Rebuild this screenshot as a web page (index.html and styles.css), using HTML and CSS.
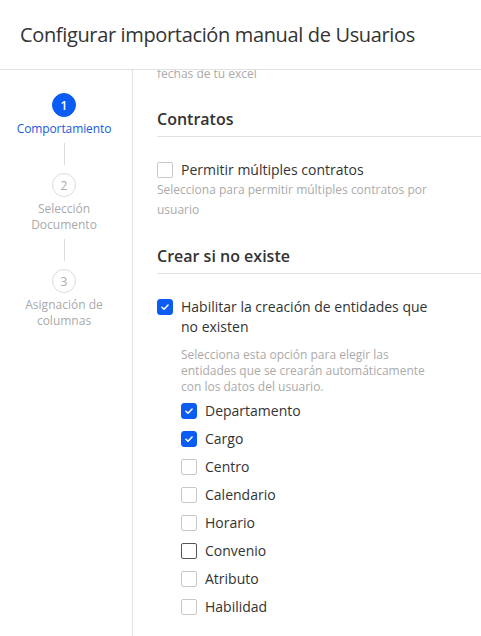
FILE: index.html
```html
<!DOCTYPE html>
<html lang="es">
<head>
<meta charset="utf-8">
<title>Configurar importación manual de Usuarios</title>
<link rel="stylesheet" href="styles.css">
</head>
<body>
<div class="modal">
  <header class="header">
    <h1 class="title">Configurar importación manual de Usuarios</h1>
  </header>
  <div class="body">
    <nav class="steps">
      <div class="step active">
        <span class="step-num">1</span>
        <span class="step-label">Comportamiento</span>
      </div>
      <span class="step-line"></span>
      <div class="step">
        <span class="step-num">2</span>
        <span class="step-label">Selección Documento</span>
      </div>
      <span class="step-line"></span>
      <div class="step">
        <span class="step-num">3</span>
        <span class="step-label">Asignación de columnas</span>
      </div>
    </nav>
    <main class="content">
      <p class="hint clipped">fechas de tu excel</p>

      <section class="section">
        <h2 class="section-title">Contratos</h2>
        <label class="check">
          <span class="box"></span>
          <span class="check-text">Permitir múltiples contratos</span>
        </label>
        <p class="hint wide">Selecciona para permitir múltiples contratos por usuario</p>
      </section>

      <section class="section">
        <h2 class="section-title">Crear si no existe</h2>
        <label class="check">
          <span class="box checked"><svg viewBox="0 0 16 16"><path d="M4.5 8.3l2.4 2.3 4.6-4.8"/></svg></span>
          <span class="check-text">Habilitar la creación de entidades que no existen</span>
        </label>
        <div class="nested">
          <p class="hint tight">Selecciona esta opción para elegir las entidades que se crearán automáticamente con los datos del usuario.</p>
          <ul class="options">
            <li class="check"><span class="box checked"><svg viewBox="0 0 16 16"><path d="M4.5 8.3l2.4 2.3 4.6-4.8"/></svg></span><span class="check-text">Departamento</span></li>
            <li class="check"><span class="box checked"><svg viewBox="0 0 16 16"><path d="M4.5 8.3l2.4 2.3 4.6-4.8"/></svg></span><span class="check-text">Cargo</span></li>
            <li class="check"><span class="box"></span><span class="check-text">Centro</span></li>
            <li class="check"><span class="box"></span><span class="check-text">Calendario</span></li>
            <li class="check"><span class="box"></span><span class="check-text">Horario</span></li>
            <li class="check"><span class="box hover"></span><span class="check-text">Convenio</span></li>
            <li class="check"><span class="box"></span><span class="check-text">Atributo</span></li>
            <li class="check"><span class="box"></span><span class="check-text">Habilidad</span></li>
          </ul>
        </div>
      </section>
    </main>
  </div>
</div>
</body>
</html>
```

FILE: styles.css
```css
* { box-sizing: border-box; }
html, body { margin: 0; padding: 0; height: 100%; }
body {
  font-family: "Open Sans", "Noto Sans", sans-serif;
  color: #333;
  background: #fff;
  overflow: hidden;
}
.modal { display: flex; flex-direction: column; height: 636px; }
.header {
  height: 70px;
  border-bottom: 1px solid #e2e2e2;
  display: flex;
  align-items: center;
  padding: 0 20px;
  flex: none;
}
.title {
  margin: 0;
  font-size: 20px;
  font-weight: 500;
  color: #333;
  letter-spacing: -0.35px;
}
.body { flex: 1; display: flex; min-height: 0; }
.steps {
  width: 133px;
  flex: none;
  border-right: 1px solid #e2e2e2;
  padding: 23px 4px 0 0;
  display: flex;
  flex-direction: column;
  align-items: center;
}
.step {
  display: flex;
  flex-direction: column;
  align-items: center;
  gap: 4px;
}
.step-num {
  width: 24px; height: 24px;
  border-radius: 50%;
  border: 1px solid #dcdcdc;
  color: #aaa;
  font-size: 12px;
  display: flex; align-items: center; justify-content: center;
}
.step.active .step-num { background: #0b5cf2; border-color: #0b5cf2; color: #fff; font-weight: 600; }
.step-label {
  font-size: 12px;
  line-height: 16px;
  text-align: center;
  color: #aaa;
  max-width: 100px;
}
.step.active .step-label { color: #1a5ad8; letter-spacing: -0.1px; }
.step-line {
  display: block;
  width: 1px; height: 22px;
  background: #dcdcdc;
  margin: 6px 0 8px;
}
.content {
  flex: 1;
  min-width: 0;
  overflow: hidden;
  padding: 0 0 0 24px;
}
.hint {
  margin: 0;
  font-size: 12px;
  line-height: 20px;
  color: #aaa;
}
.hint.clipped { line-height: 16px; margin-top: -4px; }
.hint.wide { max-width: 270px; }
.hint.tight { line-height: 16px; max-width: 250px; }
.section { margin-top: 25px; }
.section + .section { margin-top: 24px; }
.section-title {
  margin: 0 0 23px;
  font-size: 16px;
  line-height: 24px;
  font-weight: 600;
  padding-bottom: 5px;
  border-bottom: 1px solid #e2e2e2;
  color: #333;
}
.check {
  display: flex;
  align-items: flex-start;
  gap: 8px;
  font-size: 14px;
  line-height: 20px;
  color: #333;
}
.check-text { max-width: 260px; }
.box {
  flex: none;
  width: 16px; height: 16px;
  margin-top: 2px;
  border: 1px solid #c8c8c8;
  border-radius: 2px;
  background: #fff;
  display: flex; align-items: center; justify-content: center;
}
.box.hover { border-color: #555; }
.box.checked { background: #0b5cf2; border-color: #0b5cf2; border-radius: 3px; }
.box svg { width: 16px; height: 16px; fill: none; stroke: #fff; stroke-width: 1.8; stroke-linecap: round; stroke-linejoin: round; }
.nested { padding-left: 24px; margin-top: 10px; }
.options {
  list-style: none;
  margin: 6px 0 0;
  padding: 0;
  display: flex;
  flex-direction: column;
  gap: 8px;
}
```
